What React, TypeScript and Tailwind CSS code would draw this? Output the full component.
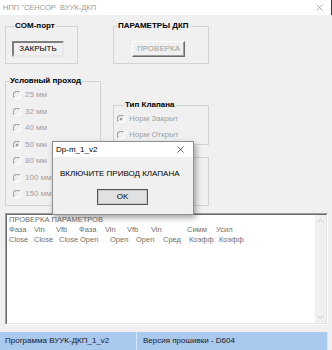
import React from "react";

function Radio({ checked }: { checked?: boolean }) {
  return (
    <svg width="8" height="8" viewBox="0 0 8 8" className="shrink-0">
      <path d="M6.6 1.4 A3.6 3.6 0 0 0 1.4 6.6" fill="none" stroke="#9a9a9a" strokeWidth="1.2" />
      <path d="M6.6 1.4 A3.6 3.6 0 0 1 1.4 6.6" fill="none" stroke="#ffffff" strokeWidth="1.2" />
      {checked && <circle cx="4" cy="4" r="1.3" fill="#9a9a9a" />}
    </svg>
  );
}

function GroupBox({
  label,
  legendClass,
  className,
  children,
}: {
  label?: string;
  legendClass?: string;
  className?: string;
  children?: React.ReactNode;
}) {
  return (
    <fieldset className={`border border-[#d3d3d3] ${className ?? ""}`}>
      {label && (
        <legend className={`px-[1px] text-[8px] leading-[12px] font-bold text-black ${legendClass ?? ""}`}>
          {label}
        </legend>
      )}
      {children}
    </fieldset>
  );
}

const sizes = ["25 мм", "32 мм", "40 мм", "50 мм", "80 мм", "100 мм", "150 мм"];

const line1 = [
  ["Фаза", "w-[25px]"],
  ["Vin", "w-[22px]"],
  ["Vfb", "w-[23px]"],
  ["Фаза", "w-[26px]"],
  ["Vin", "w-[22px]"],
  ["Vfb", "w-[24px]"],
  ["Vin", "w-[36px]"],
  ["Симм", "w-[29px]"],
  ["Усил", ""],
];

const line2 = [
  ["Close", "w-[25px]"],
  ["Close", "w-[25px]"],
  ["Close", "w-[21px]"],
  ["Open", "w-[30px]"],
  ["Open", "w-[26px]"],
  ["Open", "w-[27px]"],
  ["Сред", "w-[26px]"],
  ["Коэфф", "w-[30px]"],
  ["Коэфф", ""],
];

export default function App() {
  return (
    <div className="relative w-[332px] h-[350px] overflow-hidden bg-[#f0f0f0] font-['Liberation_Sans',Arial,sans-serif] text-[8px] text-black">
      {/* title bar */}
      <div className="h-[15px] bg-white flex items-center justify-between pl-[3px] pr-[8px] border-r border-[#3a3a3a]">
        <span className="text-[7.5px] text-[#9a9a9a] whitespace-pre">НПП "СЕНСОР  ВУУК-ДКП</span>
        <svg width="7" height="7" viewBox="0 0 7 7">
          <path d="M0.5 0.5 L6.5 6.5 M6.5 0.5 L0.5 6.5" stroke="#9a9a9a" strokeWidth="0.8" />
        </svg>
      </div>

      <div className="pl-[5px] pt-[5px]">
        {/* top row */}
        <div className="flex">
          <GroupBox label="COM-порт" legendClass="ml-[8px]" className="w-[73px] h-[44px]">
            <div className="mt-[9px] ml-[6px] w-[52px] h-[16px] flex items-center justify-center border-2 border-t-[#7e7e7e] border-l-[#7e7e7e] border-r-[#e8e8e8] border-b-[#e8e8e8] bg-[#f0f0f0] text-[8px]">
              ЗАКРЫТЬ
            </div>
          </GroupBox>
          <GroupBox label="ПАРАМЕТРЫ ДКП" legendClass="ml-[3px]" className="ml-[35px] w-[96px] h-[44px]">
            <div className="mt-[9px] ml-[18px] w-[53px] h-[16px] flex items-center justify-center border border-t-white border-l-white border-r-[#6a6a6a] border-b-[#6a6a6a] shadow-[inset_-1px_-1px_0_#a0a0a0] text-[8px] text-[#a0a0a0]">
              ПРОВЕРКА
            </div>
          </GroupBox>
        </div>

        {/* second row */}
        <div className="flex mt-[11px]">
          <GroupBox label="Условный проход" legendClass="ml-[3px]" className="w-[96px] h-[131px]">
            {sizes.map((s) => (
              <div key={s} className="h-[16.5px] flex items-center gap-[4px] pl-[7px] text-[#a0a0a0]">
                <Radio checked={s === "50 мм"} />
                <span>{s}</span>
              </div>
            ))}
          </GroupBox>
          <div className="ml-[12px] flex flex-col">
            <GroupBox label="Тип Клапана" legendClass="ml-[10px]" className="mt-[24px] w-[96px] h-[46px]">
              <div className="h-[16px] flex items-center gap-[4px] pl-[3px] text-[#a0a0a0]">
                <Radio checked />
                <span>Норм Закрыт</span>
              </div>
              <div className="h-[16px] flex items-center gap-[4px] pl-[3px] text-[#a0a0a0]">
                <Radio />
                <span>Норм Открыт</span>
              </div>
            </GroupBox>
            <GroupBox className="mt-[12px] w-[96px] h-[49px]" />
          </div>
        </div>

        {/* log */}
        <div className="mt-[7px] w-[323px] h-[112px] border border-t-[#a0a0a0] border-l-[#a0a0a0] border-r-white border-b-white">
          <div className="h-full flex border border-t-[#696969] border-l-[#696969] border-r-[#e3e3e3] border-b-[#e3e3e3] bg-white">
            <div className="flex-1 pl-[2px] text-[7.5px] leading-[10px] text-[#707070]">
              <div>ПРОВЕРКА ПАРАМЕТРОВ</div>
              <div className="flex">
                {line1.map(([t, w], i) => (
                  <span key={i} className={w}>{t}</span>
                ))}
              </div>
              <div className="flex">
                {line2.map(([t, w], i) => (
                  <span key={i} className={w}>{t}</span>
                ))}
              </div>
            </div>
            <div className="w-[11px] h-full bg-[#f0f0f0] flex flex-col justify-between items-center py-[4px]">
              <svg width="7" height="4" viewBox="0 0 7 4">
                <path d="M0.5 3.5 L3.5 0.5 L6.5 3.5" fill="none" stroke="#c0c0c0" strokeWidth="0.8" />
              </svg>
              <svg width="7" height="4" viewBox="0 0 7 4">
                <path d="M0.5 0.5 L3.5 3.5 L6.5 0.5" fill="none" stroke="#c0c0c0" strokeWidth="0.8" />
              </svg>
            </div>
          </div>
        </div>
      </div>

      {/* status bar */}
      <div className="mt-[7px] h-[18px] w-[328px] flex bg-[#a9c9ee] text-[8px] text-[#1a1a1a]">
        <div className="w-[137px] flex items-center pl-[5px] border-r border-[#d8e7f8]">Программа ВУУК-ДКП_1_v2</div>
        <div className="flex-1 flex items-center pl-[6px] border-r border-[#d8e7f8]">Версия прошивки - D604</div>
      </div>

      {/* message box */}
      <div className="absolute left-[52px] top-[141px] w-[142px] h-[74px] bg-[#f0f0f0] border border-[#8f8f8f] shadow-[2px_3px_6px_rgba(0,0,0,0.35)] flex flex-col">
        <div className="h-[15px] bg-white flex items-center justify-between pl-[3px] pr-[9px]">
          <span className="text-[8px] text-black">Dp-m_1_v2</span>
          <svg width="7" height="7" viewBox="0 0 7 7">
            <path d="M0.5 0.5 L6.5 6.5 M6.5 0.5 L0.5 6.5" stroke="#333" strokeWidth="0.8" />
          </svg>
        </div>
        <div className="pl-[7px] mt-[11px] text-[8px] leading-[12px]">ВКЛЮЧИТЕ ПРИВОД КЛАПАНА</div>
        <div className="mt-[9px] ml-[44px] w-[51px] h-[16px] flex items-center justify-center border border-[#555] shadow-[inset_0_0_0_1px_#c8c8c8] bg-[#e1e1e1] text-[8px]">
          OK
        </div>
      </div>
    </div>
  );
}
